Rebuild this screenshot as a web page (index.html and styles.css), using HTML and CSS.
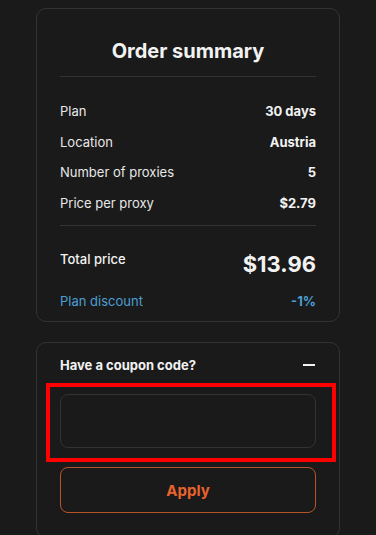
FILE: index.html
```html
<!DOCTYPE html>
<html lang="en">
<head>
    <meta charset="UTF-8">
    <meta name="viewport" content="width=device-width, initial-scale=1.0">
    <title>Order summary</title>
    <link rel="stylesheet" href="styles.css">
</head>
<body>

    <div class="checkout">

        <!-- Summary card -->
        <div class="card summary">
            <h2 class="summary-title">Order summary</h2>

            <div class="summary-rows">
                <div class="row">
                    <span class="row-label">Plan</span>
                    <span class="row-value">30 days</span>
                </div>
                <div class="row">
                    <span class="row-label">Location</span>
                    <span class="row-value">Austria</span>
                </div>
                <div class="row">
                    <span class="row-label">Number of proxies</span>
                    <span class="row-value">5</span>
                </div>
                <div class="row">
                    <span class="row-label">Price per proxy</span>
                    <span class="row-value">$2.79</span>
                </div>
            </div>

            <div class="total">
                <div class="total-row">
                    <span class="total-label">Total price</span>
                    <span class="total-value">$13.96</span>
                </div>
                <div class="discount-row">
                    <span>Plan discount</span>
                    <span class="discount-value">-1%</span>
                </div>
            </div>
        </div>

        <!-- Coupon card -->
        <div class="card coupon">
            <div class="coupon-head">
                <span>Have a coupon code?</span>
                <span class="coupon-toggle"></span>
            </div>
            <input class="coupon-input" type="text">
            <button class="button-apply">Apply</button>

            <div class="highlight"></div>
        </div>

    </div>

</body>
</html>
```

FILE: styles.css
```css
body {
    font-family: 'Inter', 'Liberation Sans', sans-serif;
    background-color: #1a1a1a;
    color: #f2f2f2;
    margin: 0;
}

.checkout {
    width: 304px;
    margin: 8px auto 0;
}

.card {
    border: 1px solid #333;
    border-radius: 10px;
    padding: 0 23px;
}

.summary {
    padding-bottom: 10px;
}

.summary-title {
    margin: 0;
    padding: 28px 0 11px;
    font-size: 20px;
    line-height: 28px;
    font-weight: 700;
    text-align: center;
    border-bottom: 1px solid #333;
}

.summary-rows {
    padding: 19px 0 6px;
    border-bottom: 1px solid #333;
}

.row {
    display: flex;
    justify-content: space-between;
    font-size: 13px;
    line-height: 30.7px;
}

.row-label {
    color: #e8e8e8;
}

.row-value {
    font-weight: 700;
}

.total {
    padding-top: 23px;
}

.total-row {
    display: flex;
    justify-content: space-between;
    align-items: flex-start;
}

.total-label {
    font-size: 13px;
    line-height: 20px;
    font-weight: 500;
}

.total-value {
    font-size: 22px;
    line-height: 30px;
    font-weight: 700;
}

.discount-row {
    display: flex;
    justify-content: space-between;
    margin-top: 12px;
    font-size: 13px;
    line-height: 20px;
    color: #4b9fd5;
}

.discount-value {
    font-weight: 700;
}

.coupon {
    position: relative;
    margin-top: 20px;
    padding-top: 12px;
    padding-bottom: 24px;
}

.coupon-head {
    display: flex;
    justify-content: space-between;
    align-items: center;
    font-size: 13px;
    line-height: 20px;
    font-weight: 700;
}

.coupon-toggle {
    width: 12px;
    height: 2px;
    margin-right: 1px;
    background-color: #f2f2f2;
}

.coupon-input {
    display: block;
    box-sizing: border-box;
    width: 100%;
    height: 54px;
    margin-top: 19px;
    background-color: #1a1a1a;
    border: 1px solid #333;
    border-radius: 8px;
    outline: none;
}

.button-apply {
    display: block;
    width: 100%;
    height: 46px;
    margin-top: 19px;
    padding-top: 2px;
    background: none;
    border: 1px solid #b9532a;
    border-radius: 8px;
    color: #e8622d;
    font-family: inherit;
    font-size: 15px;
    font-weight: 700;
    cursor: pointer;
}

/* red annotation frame around the input */
.highlight {
    position: absolute;
    left: 9px;
    top: 40px;
    width: 282px;
    height: 71px;
    border: 4px solid #ff0000;
}
```
